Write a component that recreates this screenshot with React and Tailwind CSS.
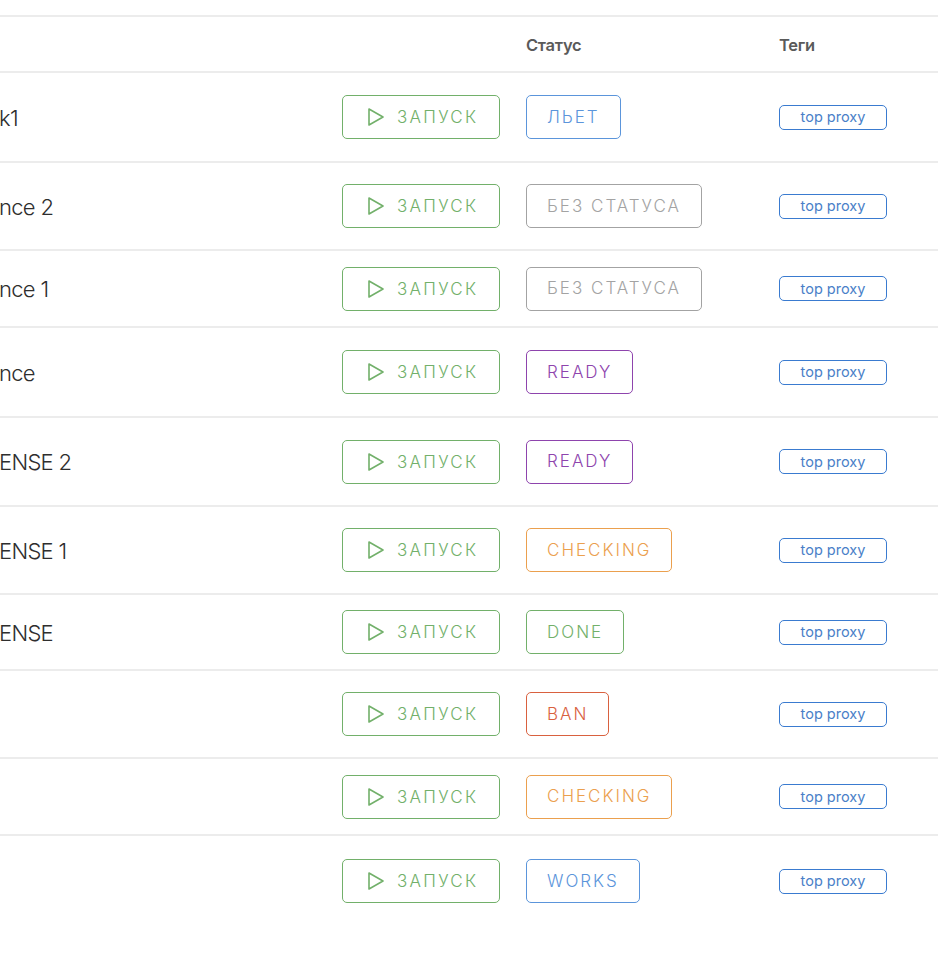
import React from 'react';

const STATUS = {
  lyet: { label: 'ЛЬЕТ', cls: 'border-[#5b95db] text-[#5b95db]' },
  none: { label: 'БЕЗ СТАТУСА', cls: 'border-[#a3a3a3] text-[#a3a3a3]' },
  ready: { label: 'READY', cls: 'border-[#8e44ad] text-[#8e44ad]' },
  checking: { label: 'CHECKING', cls: 'border-[#eba04e] text-[#eba04e]' },
  done: { label: 'DONE', cls: 'border-[#72b06a] text-[#72b06a]' },
  ban: { label: 'BAN', cls: 'border-[#d9613f] text-[#d9613f]' },
  works: { label: 'WORKS', cls: 'border-[#5b95db] text-[#5b95db]' },
};

const rows = [
  { name: 'k1', status: 'lyet', h: 'h-[90px]' },
  { name: 'nce 2', status: 'none', h: 'h-[88px]' },
  { name: 'nce 1', status: 'none', h: 'h-[77px]' },
  { name: 'nce', status: 'ready', h: 'h-[90px]' },
  { name: 'ENSE 2', status: 'ready', h: 'h-[89px]' },
  { name: 'ENSE 1', status: 'checking', h: 'h-[88px]' },
  { name: 'ENSE', status: 'done', h: 'h-[76px]' },
  { name: '', status: 'ban', h: 'h-[88px]' },
  { name: '', status: 'checking', h: 'h-[77px]' },
  { name: '', status: 'works', h: 'h-[90px]' },
];

const PlayIcon = () => (
  <svg width="18" height="20" viewBox="0 0 18 20" fill="none">
    <path d="M2 2 L16 10 L2 18 Z" stroke="currentColor" strokeWidth="1.6" strokeLinejoin="round" />
  </svg>
);

const App = () => {
  return (
    <div
      className="w-[938px] h-[958px] bg-white overflow-hidden pt-[15px]"
      style={{ fontFamily: 'Inter, "Noto Sans", sans-serif' }}
    >
      {/* Header */}
      <div className="flex items-center h-[58px] border-t-2 border-b-2 border-[#ececec]">
        <div className="w-[526px]" />
        <div className="w-[253px] text-[16.5px] font-semibold tracking-[-0.3px] text-[#5a5a5a] pt-[2px]">Статус</div>
        <div className="flex-1 text-[16.5px] font-semibold tracking-[-0.3px] text-[#5a5a5a] pt-[2px]">Теги</div>
      </div>

      {rows.map((r, i) => {
        const s = STATUS[r.status];
        return (
          <div
            key={i}
            className={`flex items-center ${r.h} ${i < rows.length - 1 ? 'border-b-2 border-[#ececec]' : ''}`}
          >
            <div className="w-[342px] text-[22px] font-light tracking-[-0.7px] text-[#2e2e2e] pt-[2px] whitespace-nowrap overflow-hidden">
              <span className="-ml-[1px]">{r.name}</span>
            </div>
            <div className="w-[184px]">
              <button className="flex items-center gap-[12px] w-[158px] h-[44px] pl-[24px] border-[1.5px] border-[#72b06a] rounded-[5px] text-[#72b06a] text-[17px] font-light tracking-[2.3px]">
                <PlayIcon />
                <span className="pt-[2px]">ЗАПУСК</span>
              </button>
            </div>
            <div className="w-[253px]">
              <span
                className={`inline-flex items-center h-[44px] px-[20px] pt-[1px] border-[1.5px] rounded-[5px] text-[17px] font-light tracking-[2px] ${s.cls}`}
              >
                {s.label}
              </span>
            </div>
            <div className="flex-1">
              <span className="inline-flex items-center justify-center w-[108px] h-[25px] border-[1.5px] border-[#3a7bd0] rounded-[5px] text-[14.5px] text-[#4a7fc8]">
                top proxy
              </span>
            </div>
          </div>
        );
      })}
    </div>
  );
};

export default App;
